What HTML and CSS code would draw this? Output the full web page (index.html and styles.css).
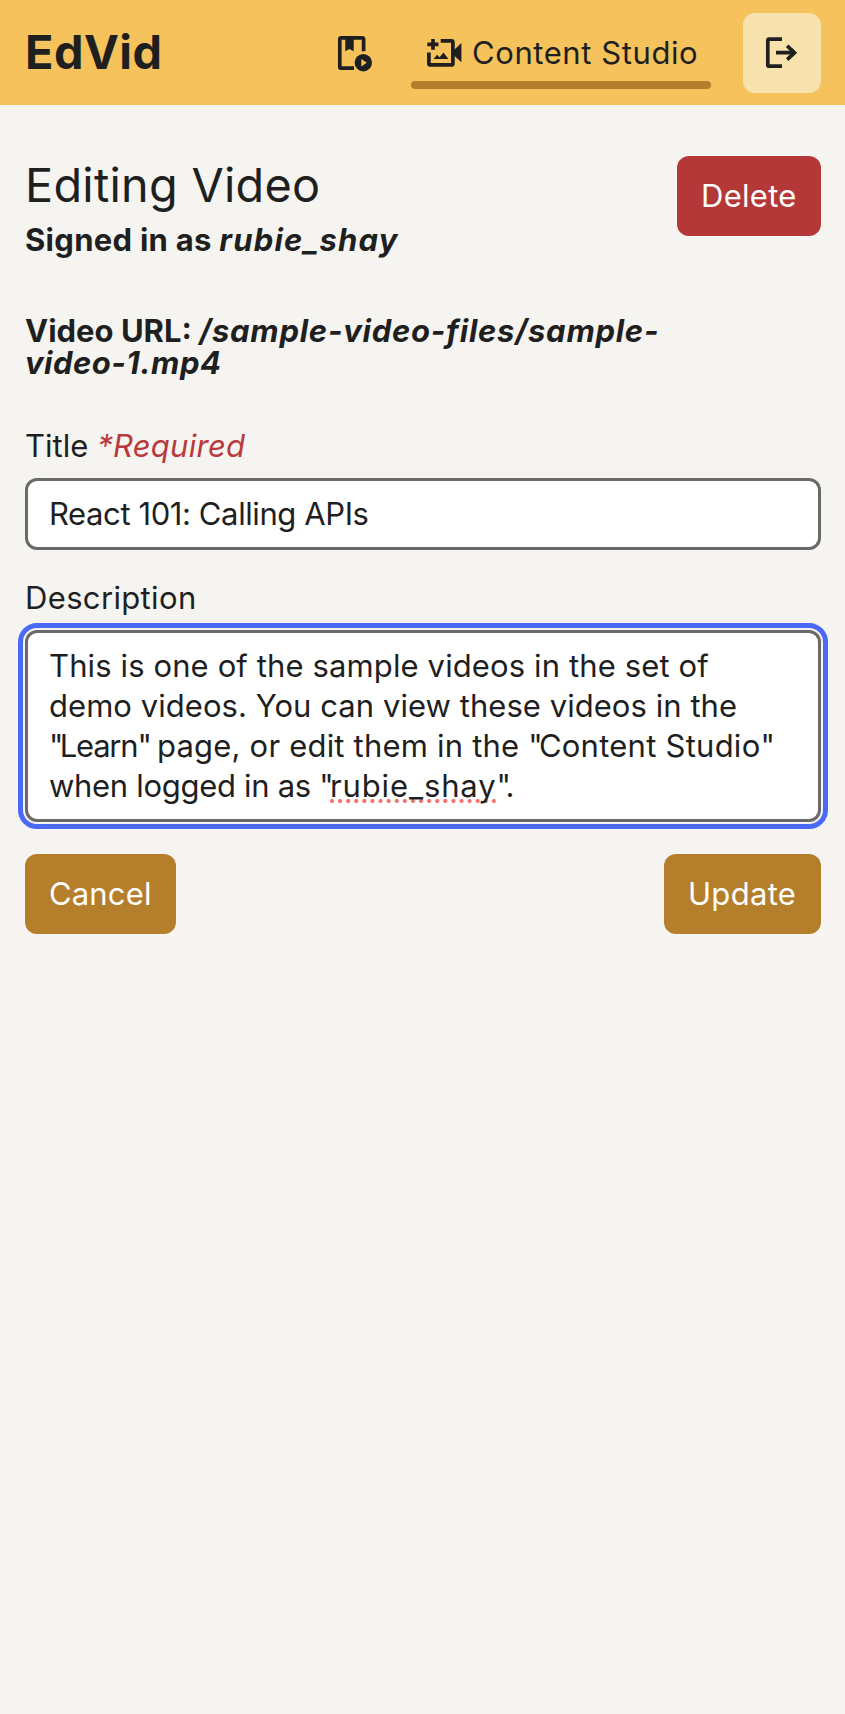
FILE: index.html
```html
<!DOCTYPE html>
<html lang="en">
<head>
<meta charset="utf-8">
<title>EdVid</title>
<link rel="stylesheet" href="styles.css">
</head>
<body>
<header class="header">
  <a class="logo">EdVid</a>
  <nav class="nav">
    <a class="nav-learn" aria-label="Learn">
      <svg class="icon" viewBox="334 33 40 40"><path class="line" d="M363.6 51.3V39.3q0-1.5-1.5-1.5H341.3q-1.5 0-1.5 1.5V66.7q0 1.5 1.5 1.5H354"/><path d="M345.3 37h8.4v14.3l-4.2-2.3-4.2 2.3z"/><circle cx="363.3" cy="62.7" r="8.7"/><path class="cut" d="M361.3 59v7.4l5.5-3.7z"/></svg>
    </a>
    <a class="nav-studio">
      <svg class="icon" viewBox="424 33 40 40"><path class="line" d="M433 39v10.8M427.3 44.3h11.2M440.7 40.9H451.4q1.5 0 1.5 1.5V63.4q0 1.5-1.5 1.5H430.4q-1.5 0-1.5-1.5V52.4"/><path d="M461.4 43v19.3L454 55.5V50zM433.6 59l3.4-4.3 2.5 2.6 4-4.8 4.9 6.5z"/></svg>
      <span class="t-studio">Content Studio</span>
    </a>
    <button class="logout" aria-label="Log out">
      <svg class="icon" viewBox="762 33 40 40"><path class="line" d="M782 39.2H769.3q-1.5 0-1.5 1.5V64.7q0 1.5 1.5 1.5H782M776 52.7H794"/><path class="line" d="M787.2 45.8l7 6.9-7 6.9"/><path d="M792 48l5 4.7-5 4.7z"/></svg>
    </button>
  </nav>
</header>
<main class="main">
  <section class="intro">
    <div class="intro-text">
      <h1 class="title">Editing Video</h1>
      <p class="signed"><span class="t-signed">Signed in as </span><em class="t-user">rubie_shay</em></p>
    </div>
    <button class="btn btn-delete">Delete</button>
  </section>
  <p class="url"><span>Video URL: </span><em class="t-path">/sample-video-files/sample-</em><br><em class="t-path2">video-1.mp4</em></p>
  <form class="form">
    <label class="label label-title"><span>Title</span><em class="required">*Required</em></label>
    <div class="field"><span class="t-input">React 101: Calling APIs</span></div>
    <label class="label label-desc"><span>Description</span></label>
    <div class="field area">
      <span class="t-l1">This is one of the sample videos in the set of</span>
      <span class="t-l2">demo videos. You can view these videos in the</span>
      <span><span class="t-learn"><span class="q">"</span>Learn<span class="q">"</span></span><span class="t-mid"> page, or edit them in the </span><span class="t-cs"><span class="q">"</span>Content Studio<span class="q">"</span></span></span>
      <span><span class="t-when">when logged in as </span><span class="q">"</span><span class="spell">rubie_shay</span><span class="q q-end">"</span>.</span>
    </div>
    <div class="actions">
      <button type="button" class="btn btn-cancel">Cancel</button>
      <button type="button" class="btn btn-update">Update</button>
    </div>
  </form>
</main>
</body>
</html>
```
FILE: styles.css
```css
* { box-sizing: border-box; }
body {
  margin: 0;
  min-height: 1714px;
  background: linear-gradient(#f5f4f0 893px, #f7f4f1 893px);
  color: #1f1f1f;
  font: 31px/40px Inter, "Liberation Sans", sans-serif;
}
h1, p { margin: 0; }
button { font: inherit; border: 0; padding: 0; }
span, em { white-space: pre; }

.header {
  height: 105px;
  padding: 0 24px 0 25px;
  display: flex;
  align-items: center;
  justify-content: space-between;
  background: #f5c25b;
}
.logo {
  font-size: 46.8px;
  font-weight: 700;
  line-height: 56px;
  letter-spacing: 0.5px;
  padding-bottom: 1px;
}
.nav { display: flex; align-items: center; }
.icon { width: 40px; height: 40px; display: block; fill: #1f1f1f; flex: none; }
.line { fill: none; stroke: #1f1f1f; stroke-width: 3.7; }
.cut { fill: #f5c25b; }
.nav-learn { margin-right: 37px; }
.nav-studio {
  position: relative;
  width: 300px;
  height: 73px;
  margin-right: 32px;
  padding-left: 13px;
  display: flex;
  align-items: center;
  gap: 8px;
}
.nav-studio::after {
  content: "";
  position: absolute;
  left: 0;
  right: 0;
  bottom: 0;
  height: 8px;
  border-radius: 4px;
  background: #b47e2b;
}
.t-studio { letter-spacing: 0.58px; }
.logout {
  width: 78px;
  height: 80px;
  display: flex;
  align-items: center;
  justify-content: center;
  border-radius: 12px;
  background: #f7e1ad;
}

.main { padding: 51px 24px 0 25px; }
.intro { display: flex; justify-content: space-between; align-items: flex-start; height: 159px; }
.title { font-size: 46.8px; font-weight: 400; line-height: 58px; letter-spacing: 0.27px; }
.signed { font-weight: 700; line-height: 32px; margin-top: 10px; }
.t-signed { letter-spacing: 0.28px; }
.t-user { letter-spacing: 1.2px; }
.url { font-weight: 700; line-height: 32px; }
.t-path { letter-spacing: 0.75px; }
.t-path2 { letter-spacing: 0.5px; }
.btn {
  height: 80px;
  display: flex;
  align-items: center;
  padding: 0 0 0 24px;
  border-radius: 12px;
  background: #b47e2b;
  color: #fff;
  letter-spacing: 0.3px;
}
.btn-delete { width: 144px; background: #b43838; }
.btn-cancel { width: 151px; letter-spacing: 0.15px; }
.btn-update { width: 157px; }
.label { display: flex; }
.label-title { margin-top: 47px; gap: 9px; }
.label-desc { margin-top: 28px; letter-spacing: 0.35px; }
.required { color: #b93a3d; letter-spacing: 0.25px; }
.field {
  margin-top: 12px;
  height: 72px;
  padding: 13px 21px;
  border: 3px solid #6b6a68;
  border-radius: 12px;
  background: #fff;
}
.t-input { letter-spacing: -0.4px; }
.area {
  height: 192px;
  display: flex;
  flex-direction: column;
  outline: 5px solid #4b69f7;
  outline-offset: 2px;
}
.t-l1 { letter-spacing: 0.12px; }
.t-l2 { letter-spacing: 0.05px; }
.t-learn { letter-spacing: -1.2px; }
.t-mid { letter-spacing: 0.2px; }
.t-cs { letter-spacing: 0.25px; }
.t-when { letter-spacing: -0.3px; }
.q { letter-spacing: -3.8px; }
.q-end { letter-spacing: -5.5px; }
.spell {
  letter-spacing: 0.87px;
  background: radial-gradient(circle at 2px 2px, #f2736b 1.8px, transparent 2.3px) left bottom 1px / 8.1px 4px repeat-x;
}
.actions { display: flex; justify-content: space-between; margin-top: 32px; }
```
